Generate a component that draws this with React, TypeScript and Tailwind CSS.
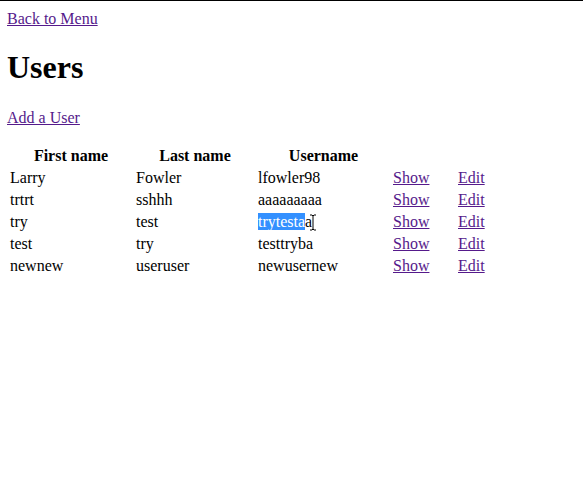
import React from "react";

const users = [
  { first: "Larry", last: "Fowler", username: "lfowler98" },
  { first: "trtrt", last: "sshhh", username: "aaaaaaaaa" },
  { first: "try", last: "test", username: "trytestaa", selected: true },
  { first: "test", last: "try", username: "testtryba" },
  { first: "newnew", last: "useruser", username: "newusernew" },
];

const linkCls = "text-[#551a8b] underline";

const IBeam = () => (
  <svg width="8" height="17" viewBox="0 0 8 17" className="inline-block align-[-4px] -ml-[3px]">
    <path d="M1 1h2l1 1 1-1h2M4 2v13M1 16h2l1-1 1 1h2" fill="none" stroke="#fff" strokeWidth="2.5" />
    <path d="M1 1h2l1 1 1-1h2M4 2v13M1 16h2l1-1 1 1h2" fill="none" stroke="#000" strokeWidth="1" />
  </svg>
);

export default function App() {
  return (
    <div className="min-h-[493px] border-t border-black bg-white px-[7px] pt-[9px] font-['Liberation_Serif',serif] text-[16px] leading-[18px] text-black">
      <a href="#" className={linkCls}>
        Back to Menu
      </a>
      <h1 className="mt-[21px] mb-[23px] text-[32px] font-bold leading-[37px]">Users</h1>
      <p className="mb-[17px]">
        <a href="#" className={linkCls}>
          Add a User
        </a>
      </p>
      <table className="border-separate border-spacing-[2px]">
        <thead>
          <tr>
            <th className="w-[124px] p-px text-center font-bold">First name</th>
            <th className="w-[120px] p-px text-center font-bold">Last name</th>
            <th className="w-[133px] p-px text-center font-bold">Username</th>
            <th className="w-[63px] p-px"></th>
            <th className="w-[60px] p-px"></th>
          </tr>
        </thead>
        <tbody>
          {users.map((u) => (
            <tr key={u.username}>
              <td className="p-px">{u.first}</td>
              <td className="p-px">{u.last}</td>
              <td className="p-px whitespace-nowrap">
                {u.selected ? (
                  <>
                    <span className="bg-[#3390ff] text-white">trytesta</span>a
                    <IBeam />
                  </>
                ) : (
                  u.username
                )}
              </td>
              <td className="p-px">
                <a href="#" className={linkCls}>
                  Show
                </a>
              </td>
              <td className="p-px">
                <a href="#" className={linkCls}>
                  Edit
                </a>
              </td>
            </tr>
          ))}
        </tbody>
      </table>
    </div>
  );
}
